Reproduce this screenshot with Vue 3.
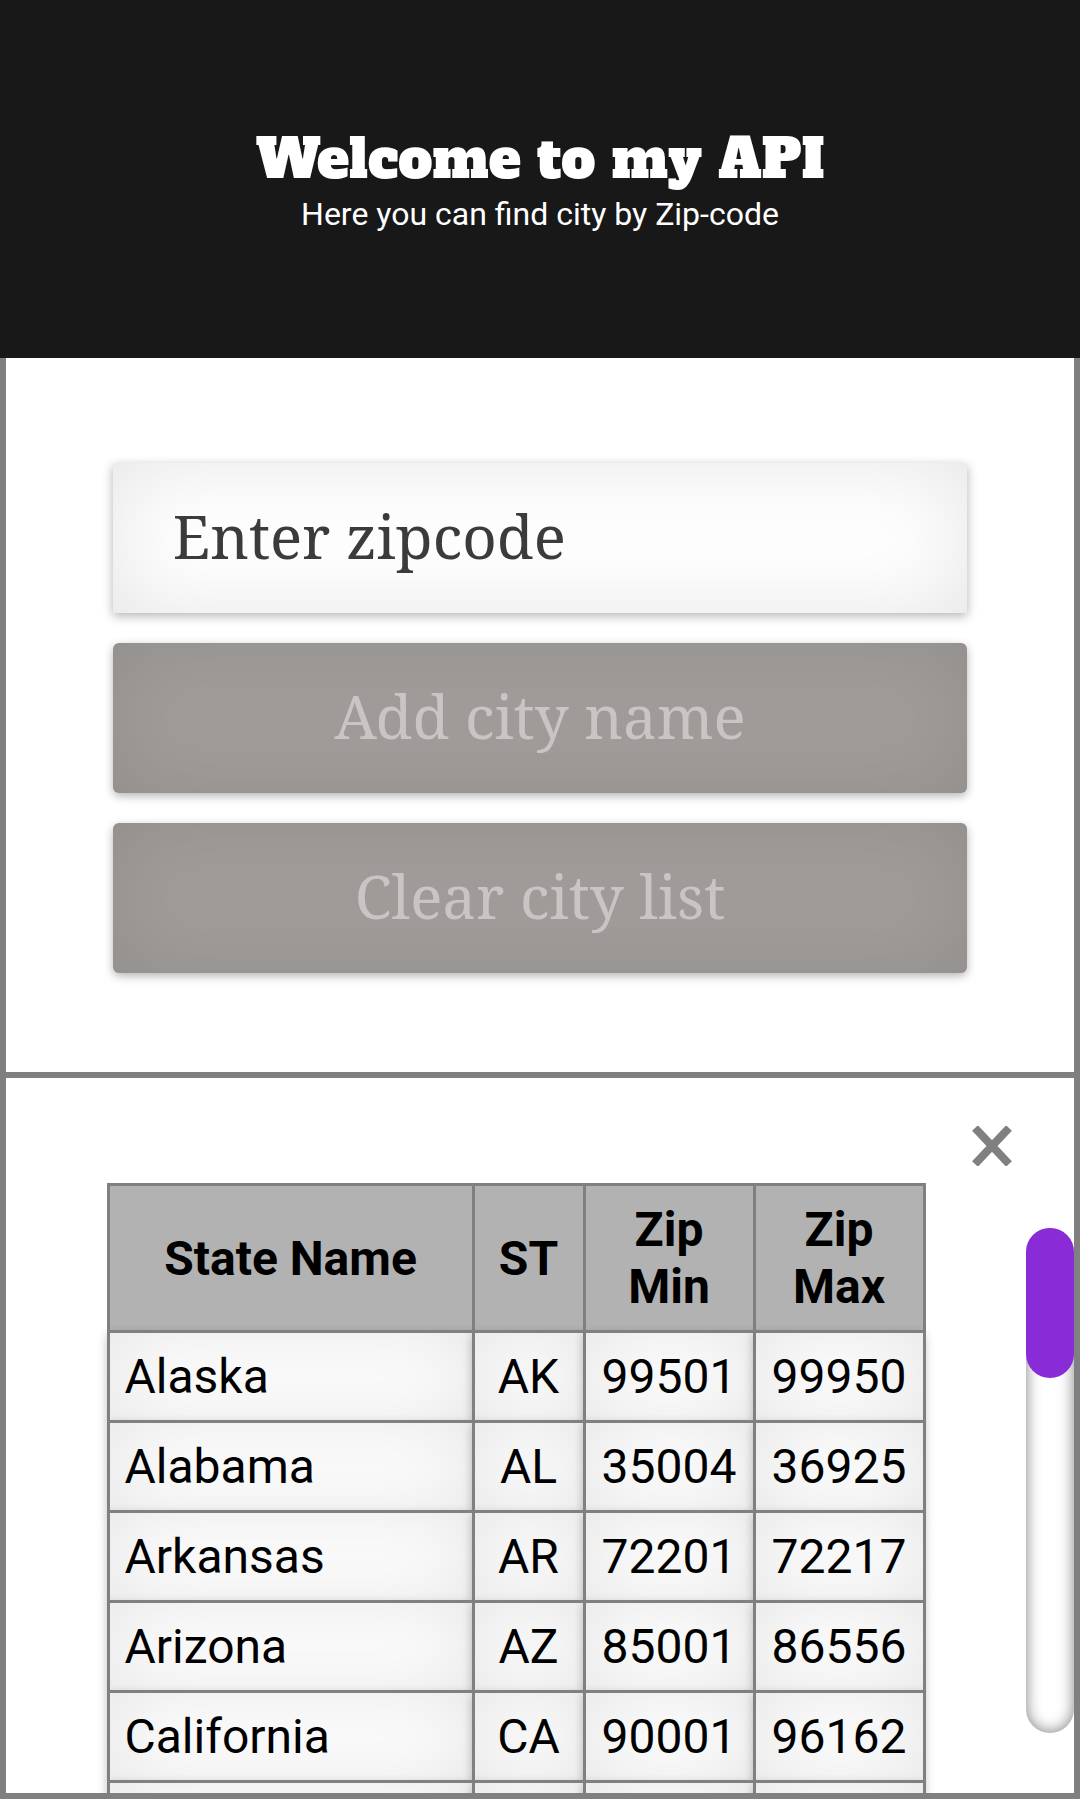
<script setup>
import { ref } from 'vue'

const zipcode = ref('')
const showStates = ref(true)

const states = [
  { name: 'Alaska', code: 'AK', min: '99501', max: '99950' },
  { name: 'Alabama', code: 'AL', min: '35004', max: '36925' },
  { name: 'Arkansas', code: 'AR', min: '72201', max: '72217' },
  { name: 'Arizona', code: 'AZ', min: '85001', max: '86556' },
  { name: 'California', code: 'CA', min: '90001', max: '96162' },
]
</script>

<template>
  <div class="page">
    <header class="hero">
      <h1>Welcome to my API</h1>
      <p>Here you can find city by Zip-code</p>
    </header>

    <main class="panel">
      <form class="lookup" @submit.prevent>
        <input v-model="zipcode" class="control" type="text" placeholder="Enter zipcode" aria-label="Enter zipcode" />
        <button class="control" type="submit" disabled>Add city name</button>
        <button class="control" type="button" disabled>Clear city list</button>
      </form>

      <section v-if="showStates" class="states">
        <div class="content">
          <div class="toolbar">
            <button class="close" type="button" aria-label="Close" @click="showStates = false">
              <svg viewBox="0 0 40 40" width="40" height="40" aria-hidden="true">
                <path d="M3 2 L37 38 M37 2 L3 38" fill="none" stroke="#808080" stroke-width="8" />
              </svg>
            </button>
          </div>
          <table>
            <colgroup>
              <col class="col-name" />
              <col class="col-code" />
              <col class="col-zip" />
              <col class="col-zip" />
            </colgroup>
            <thead>
              <tr>
                <th scope="col">State Name</th>
                <th scope="col">ST</th>
                <th scope="col">Zip Min</th>
                <th scope="col">Zip Max</th>
              </tr>
            </thead>
            <tbody>
              <tr v-for="state in states" :key="state.code">
                <td class="name">{{ state.name }}</td>
                <td>{{ state.code }}</td>
                <td>{{ state.min }}</td>
                <td>{{ state.max }}</td>
              </tr>
              <tr aria-hidden="true">
                <td v-for="n in 4" :key="n"></td>
              </tr>
            </tbody>
          </table>
        </div>
        <div class="rail" aria-hidden="true">
          <div class="thumb"></div>
        </div>
      </section>
    </main>
  </div>
</template>

<style>
body {
  margin: 0;
  background: #fff;
}
</style>

<style scoped>
.page {
  display: flex;
  flex-direction: column;
  height: 100vh;
  font-family: Roboto, sans-serif;
  color: #000;
}

.page,
.page * {
  box-sizing: border-box;
}

.hero {
  flex: none;
  padding: 123px 24px 125px;
  background: #181818;
  color: #fff;
  text-align: center;
}

.hero h1 {
  margin: 0;
  font-family: "Alfa Slab One", "DejaVu Serif Condensed", "DejaVu Serif", serif;
  font-size: 54px;
  font-weight: 400;
  line-height: 72px;
}

.hero p {
  margin: 0;
  font-size: 32px;
  line-height: 38px;
}

.panel {
  display: flex;
  flex: 1;
  flex-direction: column;
  min-height: 0;
  border: 6px solid #808080;
  border-top: 0;
}

.lookup {
  display: flex;
  flex: none;
  flex-direction: column;
  gap: 30px;
  padding: 105px 10% 99px;
  border-bottom: 6px solid #808080;
}

.control {
  width: 100%;
  height: 150px;
  margin: 0;
  border: 0;
  font-family: "Noto Serif", "DejaVu Serif Condensed", "DejaVu Serif", serif;
  font-size: 60px;
  box-shadow: 0 3px 10px rgba(0, 0, 0, 0.3), inset 0 0 90px rgba(0, 0, 0, 0.1);
}

input.control {
  padding: 0 60px 4px;
  background: #fff;
  color: #3b3b3b;
  outline: 0;
}

input.control::placeholder {
  color: #3b3b3b;
  opacity: 1;
}

button.control {
  padding: 0 0 4px;
  border-radius: 6px;
  background: #a19d9b;
  color: #c9c5c4;
}

.states {
  display: flex;
  flex: 1;
  min-height: 0;
}

.content {
  flex: 1;
  min-width: 0;
  overflow: hidden;
}

.toolbar {
  display: flex;
  justify-content: flex-end;
  padding-top: 31px;
}

.close {
  display: flex;
  align-items: center;
  justify-content: center;
  width: 68px;
  height: 74px;
  padding: 0;
  border: 0;
  background: none;
}

table {
  margin: 0 auto;
  border-collapse: collapse;
  table-layout: fixed;
  width: 819px;
  max-width: 100%;
  font-size: 48px;
  line-height: 57px;
}

.col-name {
  width: 365px;
}

.col-code {
  width: 111px;
}

.col-zip {
  width: 170px;
}

th,
td {
  padding: 15px;
  border: 3px solid #808080;
  text-align: center;
}

th {
  height: 147px;
  background: #b2b2b2;
  font-weight: 700;
}

td {
  height: 90px;
  background: #fff;
  box-shadow: 0 3px 10px rgba(0, 0, 0, 0.3), inset 0 0 80px rgba(0, 0, 0, 0.1);
}

td.name {
  text-align: left;
}

.rail {
  flex: none;
  width: 48px;
  margin: 150px 0 60px;
  border-radius: 24px;
  background: #fff;
  box-shadow: inset 0 0 15px rgba(0, 0, 0, 0.5);
}

.thumb {
  height: 150px;
  border-radius: 24px;
  background: #8a2bd8;
}
</style>
